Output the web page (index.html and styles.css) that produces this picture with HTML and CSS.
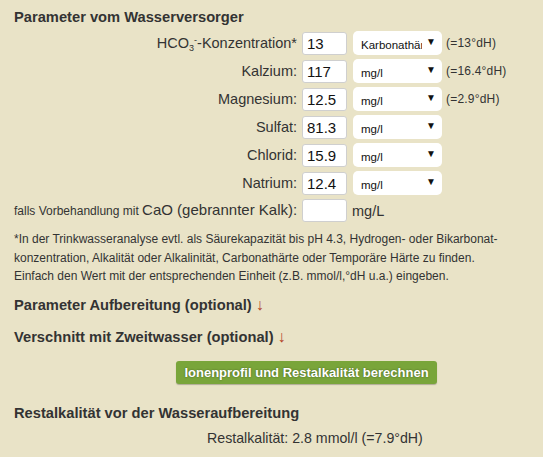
FILE: index.html
```html
<!DOCTYPE html>
<html lang="de">
<head>
<meta charset="utf-8">
<title>Restalkalität</title>
<link rel="stylesheet" href="styles.css">
</head>
<body>
<div class="page">
  <h3 class="head first">Parameter vom Wasserversorger</h3>
  <div class="grid">
    <label class="lbl">HCO<sub>3</sub><sup>-</sup>-Konzentration*</label>
    <input class="num" type="text" value="13">
    <div class="sel"><select><option>Karbonathärte</option></select><span class="arr">▼</span></div>
    <span class="note">(=13°dH)</span>

    <label class="lbl">Kalzium:</label>
    <input class="num" type="text" value="117">
    <div class="sel"><select><option>mg/l</option></select><span class="arr">▼</span></div>
    <span class="note">(=16.4°dH)</span>

    <label class="lbl">Magnesium:</label>
    <input class="num" type="text" value="12.5">
    <div class="sel"><select><option>mg/l</option></select><span class="arr">▼</span></div>
    <span class="note">(=2.9°dH)</span>

    <label class="lbl">Sulfat:</label>
    <input class="num" type="text" value="81.3">
    <div class="sel"><select><option>mg/l</option></select><span class="arr">▼</span></div>
    <span class="note"></span>

    <label class="lbl">Chlorid:</label>
    <input class="num" type="text" value="15.9">
    <div class="sel"><select><option>mg/l</option></select><span class="arr">▼</span></div>
    <span class="note"></span>

    <label class="lbl">Natrium:</label>
    <input class="num" type="text" value="12.4">
    <div class="sel"><select><option>mg/l</option></select><span class="arr">▼</span></div>
    <span class="note"></span>

    <label class="lbl cao"><span class="small">falls Vorbehandlung mit </span>CaO (gebrannter Kalk):</label>
    <input class="num" type="text" value="">
    <span class="unit">mg/L</span>
  </div>
  <p class="foot">*In der Trinkwasseranalyse evtl. als Säurekapazität bis pH 4.3, Hydrogen- oder Bikarbonat-konzentration, Alkalität oder Alkalinität, Carbonathärte oder Temporäre Härte zu finden. Einfach den Wert mit der entsprechenden Einheit (z.B. mmol/l,°dH u.a.) eingeben.</p>
  <h3 class="head sec">Parameter Aufbereitung (optional) <span class="down">↓</span></h3>
  <h3 class="head sec2">Verschnitt mit Zweitwasser (optional) <span class="down">↓</span></h3>
  <div class="btnrow"><button class="btn" type="button">Ionenprofil und Restalkalität berechnen</button></div>
  <h3 class="head res">Restalkalität vor der Wasseraufbereitung</h3>
  <p class="result">Restalkalität: 2.8 mmol/l (=7.9°dH)</p>
</div>
</body>
</html>
```
FILE: styles.css
```css
html, body {
  margin: 0;
  padding: 0;
  background: #e9e3c7;
}
body {
  font-family: "Liberation Sans", Arial, sans-serif;
  color: #333333;
}
.page {
  padding: 9px 14px 0 14px;
}
.head {
  margin: 0;
  font-size: 14.7px;
  line-height: 17px;
  font-weight: bold;
  color: #333333;
}
.grid {
  display: grid;
  grid-template-columns: 283px 45px 89px auto;
  column-gap: 5px;
  row-gap: 4px;
  margin-top: 5px;
  align-items: center;
}
.lbl {
  text-align: right;
  font-size: 14.5px;
  line-height: 18px;
  white-space: nowrap;
}
.lbl sub {
  font-size: 9px;
  vertical-align: -3px;
  line-height: 0;
}
.lbl sup {
  font-size: 9px;
  vertical-align: 5px;
  line-height: 0;
}
.cao {
  font-size: 15px;
}
.small {
  font-size: 12px;
}
.num {
  box-sizing: border-box;
  width: 45px;
  height: 23px;
  margin: 0;
  padding: 1px 4px 0 4px;
  border: 1px solid #cfcfcf;
  border-radius: 3px;
  background: #ffffff;
  font-family: "Liberation Sans", Arial, sans-serif;
  font-size: 15px;
  color: #111111;
  outline: none;
}
.sel {
  position: relative;
  width: 89px;
  height: 24px;
  margin-left: 1px;
}
.sel select {
  appearance: none;
  -webkit-appearance: none;
  box-sizing: border-box;
  width: 89px;
  height: 24px;
  margin: 0;
  padding: 4px 20px 0 8px;
  border: none;
  border-radius: 5px;
  background: #ffffff;
  font-family: "Liberation Sans", Arial, sans-serif;
  font-size: 11.5px;
  color: #111111;
  outline: none;
}
.arr {
  position: absolute;
  right: 6px;
  top: 4px;
  font-size: 10px;
  line-height: 14px;
  color: #111111;
  pointer-events: none;
}
.note {
  font-size: 12px;
  color: #333333;
  letter-spacing: 0.2px;
}
.unit {
  grid-column: 3 / 5;
  font-size: 14.5px;
}
.foot {
  margin: 8px 0 0 0;
  font-size: 12px;
  line-height: 18.5px;
  color: #333333;
  width: 500px;
}
.sec {
  margin-top: 10px;
}
.sec2 {
  margin-top: 14px;
}
.down {
  font-weight: normal;
  font-size: 16px;
  color: #b4452a;
}
.btnrow {
  margin-top: 15px;
  padding-left: 162px;
}
.btn {
  box-sizing: border-box;
  width: 261px;
  height: 23px;
  margin: 0;
  padding: 0;
  border: none;
  border-radius: 3px;
  background: #79a53a;
  box-shadow: 0 1px 1px rgba(0,0,0,0.25);
  color: #ffffff;
  font-family: "Liberation Sans", Arial, sans-serif;
  font-weight: bold;
  font-size: 13px;
  text-shadow: 0 0 2px rgba(0,0,0,0.45);
}
.res {
  margin-top: 21px;
}
.result {
  margin: 8px 0 0 0;
  padding-left: 193px;
  font-size: 14.2px;
  line-height: 17px;
}
```
